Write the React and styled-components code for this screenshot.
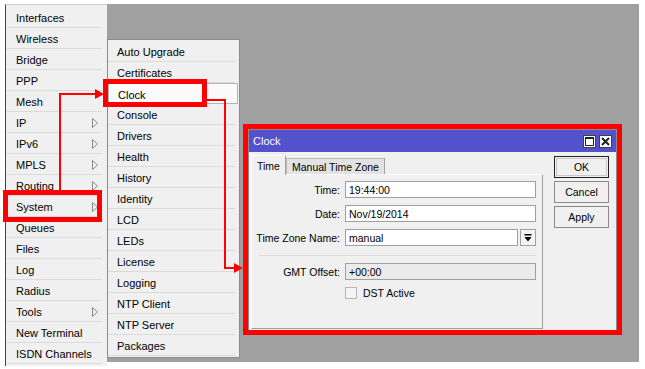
import React from 'react'
import styled, { createGlobalStyle } from 'styled-components'

const Global = createGlobalStyle`
  html, body { margin: 0; padding: 0; background: #fff; }
  body { width: 645px; height: 369px; overflow: hidden; font-family: "Liberation Sans", Arial, sans-serif; font-size: 11px; color: #000; }
`

const Screen = styled.div`
  position: relative;
  display: flex;
  align-items: flex-start;
  padding: 4px 0 0 5px;
`
const LeftMenu = styled.div`
  width: 102px;
  height: 362px;
  box-sizing: border-box;
  background: #f0f0f0;
  border-left: 1px solid #3a3a78;
  border-top: 1px solid #d0d0d0;
  padding-top: 2px;
`
const MenuRow = styled.div`
  height: 21px;
  box-sizing: border-box;
  display: flex;
  align-items: center;
  justify-content: space-between;
  padding: 2px 4px 0 9px;
  margin: 0 5px 0 1px;
  border-bottom: 1px solid #dadada;
`
const Desktop = styled.div`
  position: relative;
  width: 532px;
  height: 358px;
  background: #a0a0a0;
`
const SubMenu = styled.div`
  position: absolute;
  left: 0;
  top: 35px;
  width: 133px;
  height: 319px;
  box-sizing: border-box;
  background: #f0f0f0;
  border: 1px solid #8c8c8c;
  padding-top: 1px;
`
const SubRow = styled.div`
  height: 21px;
  box-sizing: border-box;
  display: flex;
  align-items: center;
  padding: 2px 0 0 9px;
  margin-right: ${p => (p.$active ? '1px' : '4px')};
  border-bottom: 1px solid #dadada;
  ${p => p.$active && `
    background: #fafafa;
    border: 1px solid #b4b4b4;
  `}
`
const Window = styled.div`
  position: absolute;
  left: 141px;
  top: 125px;
  width: 369px;
  height: 202px;
  box-sizing: border-box;
  background: #f0f0f0;
  border: 1px solid #8c8c8c;
  display: flex;
  flex-direction: column;
  font-size: 10.5px;
`
const TitleBar = styled.div`
  height: 22px;
  background: #5252cc;
  color: #fff;
  display: flex;
  align-items: center;
  justify-content: space-between;
  padding: 0 4px 0 4px;
  font-size: 11px;
`
const TitleButtons = styled.div`
  display: flex;
  gap: 3px;
`
const TitleBtn = styled.div`
  width: 13px;
  height: 13px;
  box-sizing: border-box;
  background: #fff;
  border: 1px solid #404040;
  display: flex;
  align-items: center;
  justify-content: center;
`
const WinBody = styled.div`
  display: flex;
  gap: 11px;
  padding: 2px 7px 0 2px;
`
const TabArea = styled.div`
  width: 292px;
  display: flex;
  flex-direction: column;
`
const TabStrip = styled.div`
  display: flex;
  align-items: flex-end;
  height: 20px;
`
const Tab = styled.div`
  height: ${p => (p.$active ? '20px' : '16px')};
  box-sizing: border-box;
  padding: 0 5px;
  display: flex;
  align-items: center;
  background: ${p => (p.$active ? '#f0f0f0' : '#e2e2e2')};
  border: 1px solid ${p => (p.$active ? '#fff' : '#b8b8b8')};
  border-right-color: #a0a0a0;
  border-bottom: none;
  position: relative;
  margin-bottom: ${p => (p.$active ? '-1px' : '0')};
  z-index: ${p => (p.$active ? 1 : 0)};
`
const Panel = styled.div`
  height: 155px;
  box-sizing: border-box;
  border: 1px solid #a0a0a0;
  border-top-color: #fff;
  border-left-color: #fff;
  padding: 6px 6px 0 0;
  display: flex;
  flex-direction: column;
`
const Field = styled.div`
  display: grid;
  grid-template-columns: 88px 191px;
  column-gap: 5px;
  align-items: center;
  height: 17px;
  margin-bottom: ${p => p.$mb ?? 7}px;
`
const Label = styled.div`
  text-align: right;
`
const Input = styled.div`
  height: 17px;
  box-sizing: border-box;
  border: 1px solid #a0a0a0;
  background: ${p => (p.$disabled ? '#ebebeb' : '#fff')};
  padding-left: 3px;
  display: flex;
  align-items: center;
`
const Combo = styled.div`
  display: flex;
  gap: 2px;
`
const DropBtn = styled.div`
  width: 16px;
  height: 17px;
  box-sizing: border-box;
  border: 1px solid #a0a0a0;
  background: #f4f4f4;
  display: flex;
  align-items: center;
  justify-content: center;
`
const Divider = styled.div`
  height: 1px;
  background: #dcdcdc;
  margin: 9px 0 7px 7px;
`
const CheckRow = styled.label`
  display: flex;
  align-items: center;
  gap: 6px;
  margin-left: 93px;
`
const Check = styled.span`
  width: 12px;
  height: 12px;
  box-sizing: border-box;
  border: 1px solid #b4b4b4;
  background: #f4f4f4;
`
const Buttons = styled.div`
  display: flex;
  flex-direction: column;
  gap: 3px;
  margin-top: 2px;
`
const Button = styled.div`
  width: 55px;
  height: 22px;
  box-sizing: border-box;
  border: 1px solid ${p => (p.$focus ? '#202020' : '#8c8c8c')};
  ${p => p.$focus && 'box-shadow: inset 0 0 0 1px #f0f0f0, inset 0 0 0 2px #c8c8c8;'}
  background: #f0f0f0;
  display: flex;
  align-items: center;
  justify-content: center;
`
const Overlay = styled.svg`
  position: absolute;
  left: 0;
  top: 0;
  pointer-events: none;
`

const Arrow = () => (
  <svg width="6" height="10" viewBox="0 0 6 10">
    <polygon points="0.5,0.5 5.5,5 0.5,9.5" fill="none" stroke="#8a8a8a" strokeWidth="1" />
  </svg>
)

const mainItems = [
  ['Interfaces'], ['Wireless'], ['Bridge'], ['PPP'], ['Mesh'], ['IP', true], ['IPv6', true],
  ['MPLS', true], ['Routing', true], ['System', true], ['Queues'], ['Files'], ['Log'],
  ['Radius'], ['Tools', true], ['New Terminal'], ['ISDN Channels'],
]
const subItems = [
  'Auto Upgrade', 'Certificates', 'Clock', 'Console', 'Drivers', 'Health', 'History',
  'Identity', 'LCD', 'LEDs', 'License', 'Logging', 'NTP Client', 'NTP Server', 'Packages',
]

export default function App() {
  return (
    <>
      <Global />
      <Screen>
        <LeftMenu>
          {mainItems.map(([name, sub]) => (
            <MenuRow key={name}>
              <span>{name}</span>
              {sub && <Arrow />}
            </MenuRow>
          ))}
        </LeftMenu>
        <Desktop>
          <SubMenu>
            {subItems.map(name => (
              <SubRow key={name} $active={name === 'Clock'}>{name}</SubRow>
            ))}
          </SubMenu>
          <Window>
            <TitleBar>
              <span>Clock</span>
              <TitleButtons>
                <TitleBtn>
                  <svg width="9" height="9" viewBox="0 0 9 9">
                    <rect x="0.5" y="0.5" width="8" height="8" fill="none" stroke="#202020" />
                    <rect x="0" y="0" width="9" height="2" fill="#202020" />
                  </svg>
                </TitleBtn>
                <TitleBtn>
                  <svg width="9" height="9" viewBox="0 0 9 9">
                    <path d="M1 1 L8 8 M8 1 L1 8" stroke="#202020" strokeWidth="2" />
                  </svg>
                </TitleBtn>
              </TitleButtons>
            </TitleBar>
            <WinBody>
              <TabArea>
                <TabStrip>
                  <Tab $active>Time</Tab>
                  <Tab>Manual Time Zone</Tab>
                </TabStrip>
                <Panel>
                  <Field>
                    <Label>Time:</Label>
                    <Input>19:44:00</Input>
                  </Field>
                  <Field>
                    <Label>Date:</Label>
                    <Input>Nov/19/2014</Input>
                  </Field>
                  <Field $mb={0}>
                    <Label>Time Zone Name:</Label>
                    <Combo>
                      <Input style={{ flex: 1 }}>manual</Input>
                      <DropBtn>
                        <svg width="8" height="8" viewBox="0 0 8 8">
                          <rect x="0.5" y="0" width="7" height="1.5" fill="#000" />
                          <polygon points="0.5,3 7.5,3 4,7.5" fill="#000" />
                        </svg>
                      </DropBtn>
                    </Combo>
                  </Field>
                  <Divider />
                  <Field $mb={7}>
                    <Label>GMT Offset:</Label>
                    <Input $disabled>+00:00</Input>
                  </Field>
                  <CheckRow>
                    <Check />
                    <span>DST Active</span>
                  </CheckRow>
                </Panel>
              </TabArea>
              <Buttons>
                <Button $focus>OK</Button>
                <Button>Cancel</Button>
                <Button>Apply</Button>
              </Buttons>
            </WinBody>
          </Window>
        </Desktop>
        <Overlay width="645" height="369" viewBox="0 0 645 369">
          <g fill="none" stroke="#ff0000">
            <rect x="5.5" y="192.5" width="94" height="27" strokeWidth="5" />
            <rect x="105.5" y="81.5" width="99" height="23" strokeWidth="5" />
            <rect x="245.5" y="126.5" width="374" height="206" strokeWidth="5" />
            <path d="M60 190 V94 H97" strokeWidth="2" />
            <path d="M207 100 H225 V268 H236" strokeWidth="2" />
          </g>
          <polygon points="95,89 104,94 95,99" fill="#ff0000" />
          <polygon points="234,263 243,268 234,273" fill="#ff0000" />
        </Overlay>
      </Screen>
    </>
  )
}
